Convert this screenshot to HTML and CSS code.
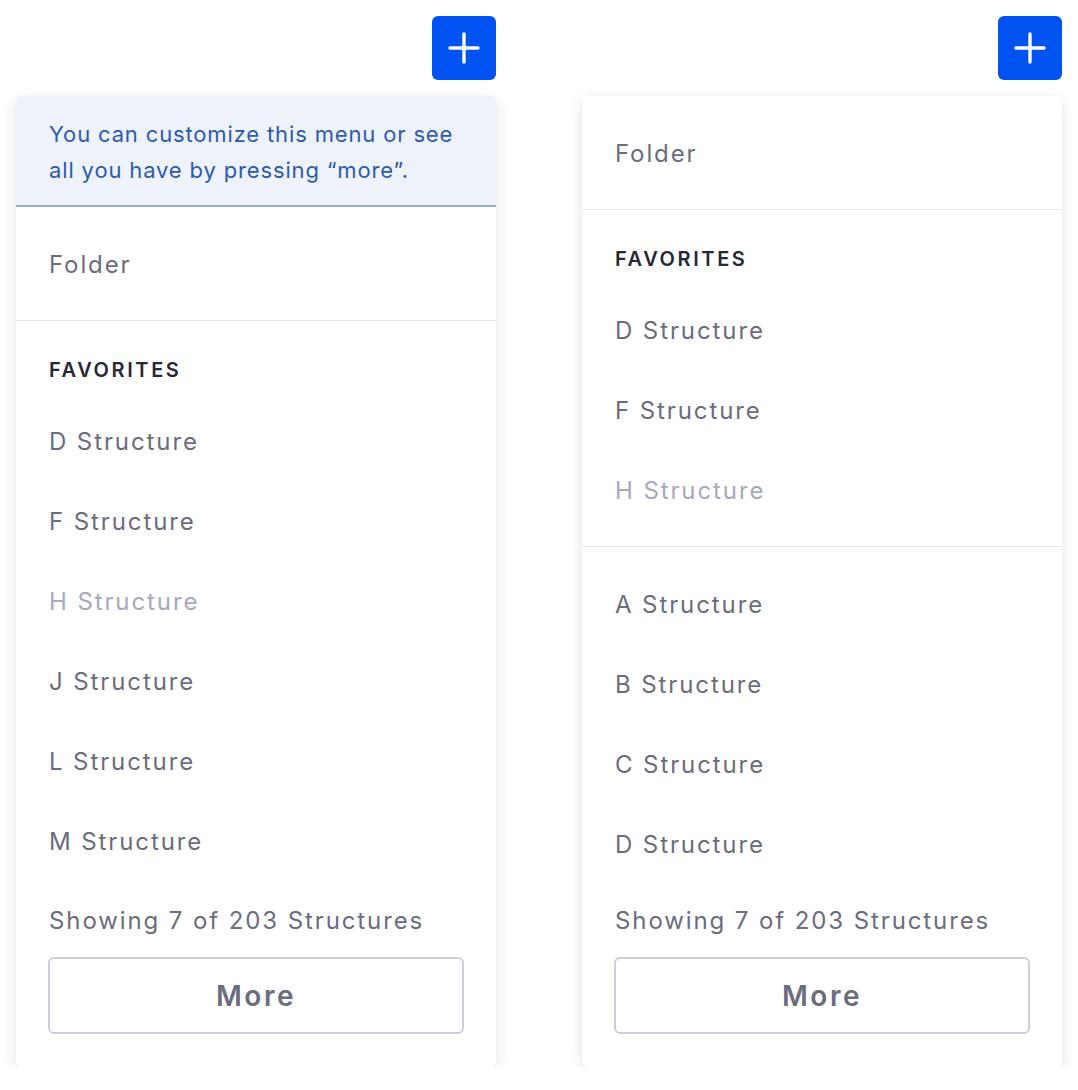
FILE: index.html
```html
<!DOCTYPE html>
<html lang="en">
<head>
<meta charset="utf-8">
<title>Menu</title>
<link rel="stylesheet" href="styles.css">
</head>
<body>
<div class="page">
  <div class="column">
    <div class="toolbar">
      <button class="add-btn" aria-label="Add">
        <svg width="32" height="32" viewBox="0 0 32 32"><path d="M16 2v28M2 16h28" stroke="#fff" stroke-width="3.4" stroke-linecap="round" fill="none"/></svg>
      </button>
    </div>
    <div class="card">
      <div class="info">You can customize this menu or see all you have by pressing “more”.</div>
      <div class="section first">
        <div class="item">Folder</div>
      </div>
      <div class="section last">
        <div class="header">FAVORITES</div>
        <div class="item">D Structure</div>
        <div class="item">F Structure</div>
        <div class="item disabled">H Structure</div>
        <div class="item">J Structure</div>
        <div class="item">L Structure</div>
        <div class="item">M Structure</div>
      </div>
      <div class="footer">
        <div class="showing">Showing 7 of 203 Structures</div>
        <button class="more">More</button>
      </div>
    </div>
  </div>
  <div class="column">
    <div class="toolbar">
      <button class="add-btn" aria-label="Add">
        <svg width="32" height="32" viewBox="0 0 32 32"><path d="M16 2v28M2 16h28" stroke="#fff" stroke-width="3.4" stroke-linecap="round" fill="none"/></svg>
      </button>
    </div>
    <div class="card">
      <div class="section first">
        <div class="item">Folder</div>
      </div>
      <div class="section">
        <div class="header">FAVORITES</div>
        <div class="item">D Structure</div>
        <div class="item">F Structure</div>
        <div class="item disabled">H Structure</div>
      </div>
      <div class="section last">
        <div class="item">A Structure</div>
        <div class="item">B Structure</div>
        <div class="item">C Structure</div>
        <div class="item">D Structure</div>
      </div>
      <div class="footer">
        <div class="showing">Showing 7 of 203 Structures</div>
        <button class="more">More</button>
      </div>
    </div>
  </div>
</div>
</body>
</html>
```

FILE: styles.css
```css
* { box-sizing: border-box; }
html, body { margin: 0; padding: 0; background: #fff; }
body {
  font-family: Inter, "Noto Sans", "Liberation Sans", sans-serif;
  color: #6b6c7e;
}
.page {
  display: flex;
  align-items: stretch;
  gap: 86px;
  padding: 16px 16px 0 16px;
}
.column {
  width: 480px;
  display: flex;
  flex-direction: column;
}
.toolbar {
  display: flex;
  justify-content: flex-end;
  height: 64px;
  margin-bottom: 16px;
  flex: none;
}
.add-btn {
  width: 64px;
  height: 64px;
  border: none;
  border-radius: 6px;
  background: #0053f0;
  display: flex;
  align-items: center;
  justify-content: center;
  padding: 0;
}
.card {
  flex: 1;
  display: flex;
  flex-direction: column;
  background: #fff;
  border-radius: 6px;
  box-shadow: 0 4px 14px rgba(39, 40, 51, 0.12), 0 0 2px rgba(39,40,51,0.04);
  overflow: hidden;
}
.info {
  background: #eef2fa;
  color: #2e5aac;
  font-size: 22px;
  line-height: 36px;
  padding: 20px 30px 17px 33px;
  border-bottom: 2px solid #98aed6;
  letter-spacing: 0.85px;
}
.section {
  border-top: 1px solid #e7e7ed;
  padding: 17px 0 16px;
}
.section.first { border-top: none; padding: 17px 0 16px; }
.section.last { padding-bottom: 0; }
.header {
  height: 63px;
  display: flex;
  align-items: center;
  padding-left: 33px;
  font-size: 20px;
  font-weight: 600;
  color: #272833;
  letter-spacing: 2.6px;
}
.item {
  height: 80px;
  display: flex;
  align-items: center;
  padding-left: 33px;
  font-size: 24px;
  letter-spacing: 1.9px;
  color: #6b6c7e;
}
.item.disabled { color: #a7a9bc; }
.footer {
  margin-top: auto;
  padding: 0 32px 33px 32px;
}
.showing {
  height: 73px;
  display: flex;
  align-items: center;
  padding-left: 1px;
  font-size: 24px;
  letter-spacing: 1.9px;
}
.more {
  display: block;
  width: 100%;
  height: 77px;
  border: 2px solid #cdced9;
  border-radius: 6px;
  background: #fff;
  font-family: inherit;
  font-size: 28px;
  font-weight: 600;
  letter-spacing: 2.5px;
  color: #6b6c7e;
}
```
